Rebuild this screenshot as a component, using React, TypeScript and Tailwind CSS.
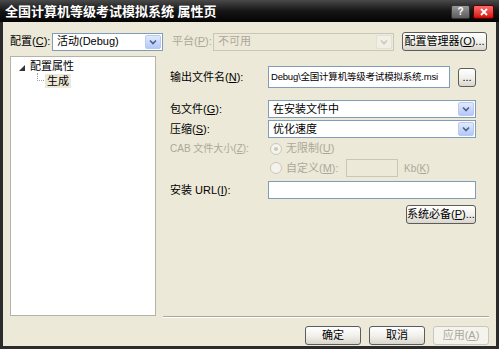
import React from "react";

const font = "font-['Liberation_Sans','Noto_Sans_CJK_SC',sans-serif]";

const ArrowBtn = ({ disabled }: { disabled?: boolean }) => (
  <div
    className={`w-[16px] h-full flex items-center justify-center rounded-[2px] border ${
      disabled ? "border-[#e3e1d6] bg-[#f1efe6]" : "border-[#b9c9ef] bg-gradient-to-b from-[#e1eafe] to-[#b4c8f6]"
    }`}
  >
    <svg width="8" height="6" viewBox="0 0 8 6">
      <path d="M1 1.5 L4 4.5 L7 1.5" fill="none" stroke={disabled ? "#c9c7ba" : "#4d6185"} strokeWidth="1.6" />
    </svg>
  </div>
);

const Select = ({ value, width, disabled }: { value: string; width: string; disabled?: boolean }) => (
  <div
    className={`${width} h-[18px] flex items-center border p-[1px] ${
      disabled ? "border-[#c9c7ba] bg-[#ece9d8]" : "border-[#7f9db9] bg-white"
    }`}
  >
    <span className={`flex-1 pl-[3px] leading-none ${disabled ? "text-[#aca899]" : "text-black"}`}>{value}</span>
    <ArrowBtn disabled={disabled} />
  </div>
);

const Button = ({ children, width, disabled }: { children: React.ReactNode; width: string; disabled?: boolean }) => (
  <div
    className={`${width} h-[19px] flex items-center justify-center rounded-[3px] border leading-none ${
      disabled
        ? "border-[#c9c7ba] bg-[#f4f3ee] text-[#aca899]"
        : "border-[#5c5c5c] bg-gradient-to-b from-[#ffffff] via-[#f2f1ec] to-[#d8d6cc] text-black"
    }`}
  >
    {children}
  </div>
);

const Radio = ({ checked }: { checked?: boolean }) => (
  <div className="w-[12px] h-[12px] rounded-full border border-[#cac8bb] bg-[#f4f3ee] flex items-center justify-center">
    {checked && <div className="w-[4px] h-[4px] rounded-full bg-[#cac8bb]" />}
  </div>
);

export default function App() {
  return (
    <div className={`w-[499px] h-[349px] bg-[#2b2b2b] flex flex-col whitespace-nowrap ${font}`}>
      {/* Title bar */}
      <div className="h-[22px] flex items-center justify-between bg-gradient-to-b from-[#4a4a4a] via-[#161616] to-[#050505] px-[5px]">
        <span className="text-white font-bold text-[13px] leading-none">全国计算机等级考试模拟系统 属性页</span>
        <div className="flex gap-[3px] pt-[1px]">
          <div className="w-[19px] h-[14px] rounded-[2px] bg-gradient-to-b from-[#9a9a9a] to-[#5c5c5c] border border-[#333] flex items-center justify-center text-white text-[10px] font-bold leading-none">?</div>
          <div className="w-[21px] h-[14px] rounded-[2px] bg-gradient-to-b from-[#ff6a6a] to-[#d10000] border border-[#5a0000] flex items-center justify-center">
            <svg width="8" height="8" viewBox="0 0 8 8">
              <path d="M1 1 L7 7 M7 1 L1 7" stroke="white" strokeWidth="1.8" />
            </svg>
          </div>
        </div>
      </div>

      {/* Body */}
      <div className="flex-1 mx-[3px] mb-[3px] bg-[#ece9d8] flex flex-col pl-[7px] pr-[7px] pt-[10px] text-[11px]">
        {/* Configuration row */}
        <div className="h-[19px] flex items-center">
          <span className="w-[42px]">配置(<u>C</u>):</span>
          <Select value="活动(Debug)" width="w-[111px]" />
          <span className="ml-[9px] w-[41px] text-[#aca899]">平台(<u>P</u>):</span>
          <Select value="不可用" width="w-[181px]" disabled />
          <div className="ml-[8px]">
            <Button width="w-[85px]">配置管理器(<u>O</u>)...</Button>
          </div>
        </div>

        {/* Main */}
        <div className="mt-[5px] h-[262px] flex">
          {/* Tree */}
          <div className="w-[146px] h-[260px] bg-white border border-[#b5b3a8] pt-[3px]">
            <div className="flex items-center h-[13px] pl-[8px]">
              <svg width="6" height="6" viewBox="0 0 6 6" className="mr-[5px] mt-[2px]">
                <path d="M6 0 L6 6 L0 6 Z" fill="#333" />
              </svg>
              <span className="leading-none">配置属性</span>
            </div>
            <div className="flex items-center h-[14px] pl-[26px] mt-[1px]">
              <div className="w-[7px] h-[8px] border-l border-b border-dotted border-[#a0a0a0] -mt-[8px]" />
              <span className="ml-[1px] px-[2px] bg-[#ece9d8] leading-[14px]">生成</span>
            </div>
          </div>

          {/* Right panel */}
          <div className="ml-[7px] flex-1 flex flex-col">
            <div className="flex-1 pl-[7px] pt-[10px] flex flex-col">
              <div className="h-[22px] flex items-center">
                <span className="w-[98px]">输出文件名(<u>N</u>):</span>
                <div className="w-[182px] h-[22px] border border-[#7f9db9] bg-white flex items-center pl-[2px] text-[9.5px] tracking-[-0.2px] overflow-hidden">
                  Debug\全国计算机等级考试模拟系统.msi
                </div>
                <div className="ml-[8px]">
                  <Button width="w-[18px]">...</Button>
                </div>
              </div>

              <div className="mt-[12px] h-[18px] flex items-center">
                <span className="w-[98px]">包文件(<u>G</u>):</span>
                <Select value="在安装文件中" width="w-[208px]" />
              </div>
              <div className="mt-[2px] h-[18px] flex items-center">
                <span className="w-[98px]">压缩(<u>S</u>):</span>
                <Select value="优化速度" width="w-[208px]" />
              </div>

              <div className="mt-[3px] h-[15px] flex items-center text-[#aca899]">
                <span className="w-[100px] text-[10px]">CAB 文件大小(<u>Z</u>):</span>
                <Radio checked />
                <span className="ml-[4px]">无限制(<u>U</u>)</span>
              </div>
              <div className="mt-[3px] h-[18px] flex items-center text-[#aca899]">
                <span className="w-[100px]" />
                <Radio />
                <span className="ml-[4px] w-[60px]">自定义(<u>M</u>):</span>
                <div className="w-[52px] h-[18px] border border-[#c9c7ba] bg-[#ece9d8]" />
                <span className="ml-[6px] text-[10px]">Kb(<u>K</u>)</span>
              </div>

              <div className="mt-[4px] h-[18px] flex items-center">
                <span className="w-[98px]">安装 URL(<u>I</u>):</span>
                <div className="w-[208px] h-[18px] border border-[#7f9db9] bg-white" />
              </div>

              <div className="mt-[6px] w-[306px] flex justify-end">
                <Button width="w-[70px]">系统必备(<u>P</u>)...</Button>
              </div>
            </div>
            <div className="h-[2px] border-t border-[#aca899] border-b-white border-b" />
          </div>
        </div>

        {/* Buttons */}
        <div className="mt-[8px] flex justify-end gap-[8px]">
          <Button width="w-[56px]">确定</Button>
          <Button width="w-[56px]">取消</Button>
          <Button width="w-[56px]" disabled>应用(<u>A</u>)</Button>
        </div>
      </div>
    </div>
  );
}
